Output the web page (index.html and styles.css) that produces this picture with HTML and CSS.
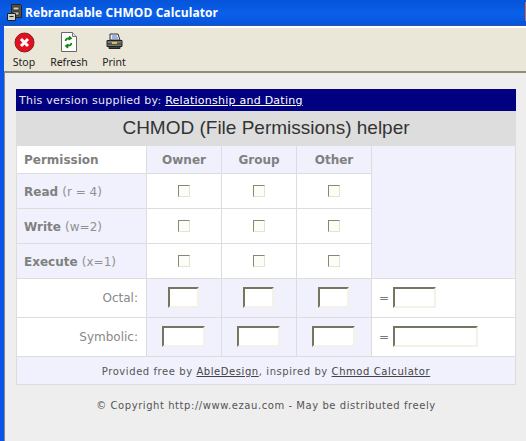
FILE: index.html
```html
<!DOCTYPE html>
<html lang="en">
<head>
    <meta charset="UTF-8">
    <title>Rebrandable CHMOD Calculator</title>
    <link rel="stylesheet" href="styles.css">
</head>
<body>
    <div class="window">
        <div class="titlebar">
            <svg class="app-icon" width="15" height="18" viewBox="0 0 15 18">
                <path d="M4.500 .5h9l1 1v12h-10z" fill="#55554f" stroke="#222"/>
                <path d="M6 3h6v3H6zM6 8h6v3H6z" fill="#c8c8bc" stroke="#222" stroke-width=".8"/>
                <path d="M.5 9.500h8v7h-8z" fill="#cfcfc3" stroke="#222"/>
                <path d="M2.500 12.500h4" stroke="#222"/>
            </svg>
            <span class="title-text">Rebrandable CHMOD Calculator</span>
            <span class="close-edge"></span>
        </div>
        <div class="toolbar">
            <div class="tool tool-stop">
                <svg width="21" height="21" viewBox="0 0 21 21">
                    <circle cx="10.500" cy="10.500" r="9.500" fill="#e0101e" stroke="#8e1a20"/>
                    <path d="M7 7l7 7M14 7l-7 7" stroke="#fff" stroke-width="3"/>
                </svg>
                <span>Stop</span>
            </div>
            <div class="tool tool-refresh">
                <svg width="21" height="21" viewBox="0 0 21 21">
                    <path d="M2.500 .5h11l4 4v15h-15z" fill="#fff" stroke="#666"/>
                    <path d="M13.500 .5v4h4" fill="#ddd" stroke="#777"/>
                    <path d="M6.500 9c.5-2 2-3 4-2.500M10 4.300l2 2-2.500 1.500" fill="none" stroke="#16851c" stroke-width="1.700"/>
                    <path d="M12.500 11c-.5 2-2 3-4 2.500M9 15.800l-2-2 2.500-1.500" fill="none" stroke="#16851c" stroke-width="1.700"/>
                </svg>
                <span>Refresh</span>
            </div>
            <div class="tool tool-print">
                <svg width="21" height="21" viewBox="0 0 21 21">
                    <path d="M6 2h8l2 6H6z" fill="#e8ecf8" stroke="#333"/>
                    <path d="M8 4h5M8 6h6" stroke="#5a78c8"/>
                    <path d="M3 8.500h15v6H3z" fill="#77776f" stroke="#222"/>
                    <path d="M3 12h15" stroke="#333"/>
                    <path d="M5 14.500h11v2H5z" fill="#44443e" stroke="#222"/>
                    <path d="M8 11h5" stroke="#e8e060" stroke-width="1.500"/>
                </svg>
                <span>Print</span>
            </div>
        </div>
        <div class="content">
            <div class="panel">
                <div class="supplied">This version supplied by: <a href="#">Relationship and Dating</a></div>
                <h1>CHMOD (File Permissions) helper</h1>
                <table class="chmod">
                    <colgroup>
                        <col class="col-label">
                        <col class="col-who">
                        <col class="col-who">
                        <col class="col-who">
                        <col>
                    </colgroup>
                    <tr class="row-head">
                        <th class="left plain">Permission</th>
                        <th class="tint">Owner</th>
                        <th class="tint">Group</th>
                        <th class="tint">Other</th>
                        <td class="tint blank" rowspan="4"></td>
                    </tr>
                    <tr class="row-check">
                        <th class="left tint">Read <span>(r = 4)</span></th>
                        <td><input type="checkbox"></td>
                        <td><input type="checkbox"></td>
                        <td><input type="checkbox"></td>
                    </tr>
                    <tr class="row-check">
                        <th class="left tint">Write <span>(w=2)</span></th>
                        <td><input type="checkbox"></td>
                        <td><input type="checkbox"></td>
                        <td><input type="checkbox"></td>
                    </tr>
                    <tr class="row-check">
                        <th class="left tint">Execute <span>(x=1)</span></th>
                        <td><input type="checkbox"></td>
                        <td><input type="checkbox"></td>
                        <td><input type="checkbox"></td>
                    </tr>
                    <tr class="row-field">
                        <td class="field-label">Octal:</td>
                        <td class="tint"><input class="box-s" type="text"></td>
                        <td class="tint"><input class="box-s" type="text"></td>
                        <td class="tint"><input class="box-s" type="text"></td>
                        <td class="result">= <input class="box-m" type="text"></td>
                    </tr>
                    <tr class="row-field">
                        <td class="field-label">Symbolic:</td>
                        <td class="tint"><input class="box-m" type="text"></td>
                        <td class="tint"><input class="box-m" type="text"></td>
                        <td class="tint"><input class="box-m" type="text"></td>
                        <td class="result">= <input class="box-l" type="text"></td>
                    </tr>
                    <tr class="row-foot">
                        <td class="tint" colspan="5">Provided free by <a href="#">AbleDesign</a>, inspired by <a href="#">Chmod Calculator</a></td>
                    </tr>
                </table>
            </div>
            <p class="copyright">© Copyright http://www.ezau.com - May be distributed freely</p>
        </div>
    </div>
</body>
</html>
```

FILE: styles.css
```css
html, body {
    margin: 0;
    height: 100%;
    overflow: hidden;
}
body {
    font-family: "DejaVu Sans", sans-serif;
    font-size: 11px;
    color: #666;
}
.window {
    display: flex;
    flex-direction: column;
    height: 441px;
    background: #0a55e8;
}
.titlebar {
    display: flex;
    align-items: center;
    gap: 3px;
    height: 25px;
    padding-left: 7px;
    background: linear-gradient(#0553d8, #0a60ea 55%, #0453dc);
    border-bottom: 1px solid #2f55a8;
    position: relative;
}
.title-text {
    color: #fff;
    font-family: "Open Sans", sans-serif;
    font-size: 12px;
    font-weight: 700;
    letter-spacing: 0.08px;
}
.close-edge {
    position: absolute;
    right: 0;
    top: 2px;
    width: 1px;
    height: 19px;
    background: #e0683c;
}
.toolbar {
    display: flex;
    height: 43px;
    margin-left: 4px;
    border-top: 2px solid #fff;
    border-bottom: 2px solid #8f8c7c;
    background: #ebe7d8;
    box-sizing: content-box;
}
.tool {
    display: flex;
    flex-direction: column;
    align-items: center;
    padding-top: 4px;
    color: #222;
    font-family: "Noto Sans", sans-serif;
    font-size: 10.5px;
    line-height: 14px;
}
.tool svg {
    display: block;
    margin-bottom: 2px;
}
.tool-stop { width: 30px; margin-left: 5px; }
.tool-refresh { width: 40px; margin-left: 10px; }
.tool-print { width: 24px; margin-left: 13px; }
.content {
    flex: 1;
    margin-left: 4px;
    border-left: 1px solid #888;
    padding: 16px 9px 0 11px;
    background: #eee;
}
.panel {
    width: 500px;
}
.supplied {
    height: 22px;
    line-height: 23px;
    padding-left: 3px;
    background: #000080;
    color: #e8e8f4;
    letter-spacing: 0.25px;
}
.supplied a {
    color: #fff;
}
h1 {
    margin: 0;
    height: 34px;
    line-height: 34px;
    background: #ddd;
    color: #333;
    font-family: "Liberation Sans", sans-serif;
    font-size: 19px;
    font-weight: 400;
    text-align: center;
}
.chmod {
    width: 500px;
    table-layout: fixed;
    border-collapse: collapse;
    background: #fff;
}
.col-label { width: 130px; }
.col-who { width: 75px; }
.chmod th, .chmod td {
    padding: 0;
    border: 1px solid #ddd;
    text-align: center;
}
.chmod .tint { background: #f1f1fd; }
.chmod .plain { background: #fff; }
.chmod th {
    font-weight: 700;
    color: #808080;
    font-size: 12px;
}
.chmod .left {
    text-align: left;
    padding-left: 7px;
}
.row-check .left {
    padding-top: 2px;
}
.left span {
    font-weight: 400;
    color: #909090;
    font-size: 12px;
}
.row-head { height: 28px; }
.row-check { height: 35px; }
.row-field { height: 39px; }
.row-foot { height: 28px; }
.chmod .row-foot td {
    padding-top: 2px;
    font-size: 10px;
    letter-spacing: 0.57px;
    color: #555;
}
.row-foot a {
    color: #444;
}
.chmod .field-label {
    text-align: right;
    padding-right: 8px;
    color: #888;
    font-size: 12px;
}
.chmod .result {
    text-align: left;
    padding-left: 7px;
    color: #777;
    font-size: 12px;
}
input[type="checkbox"] {
    appearance: none;
    display: block;
    box-sizing: border-box;
    width: 12px;
    height: 12px;
    margin: 0 auto;
    background: #fdfdf8;
    border: 1px solid;
    border-color: #8a8672 #e6e3d2 #e6e3d2 #8a8672;
}
input[type="text"] {
    box-sizing: border-box;
    height: 21px;
    padding: 0;
    margin-bottom: 2px;
    vertical-align: middle;
    background: #fff;
    border: 2px solid;
    border-color: #77745f #f4f2e6 #f4f2e6 #77745f;
}
.tint input[type="text"] {
    margin-right: 2px;
}
.box-s { width: 31px; }
.box-m { width: 43px; }
.box-l { width: 85px; }
.copyright {
    width: 500px;
    margin: 15px 0 0;
    font-size: 10px;
    letter-spacing: 0.56px;
    color: #555;
    text-align: center;
}
```
